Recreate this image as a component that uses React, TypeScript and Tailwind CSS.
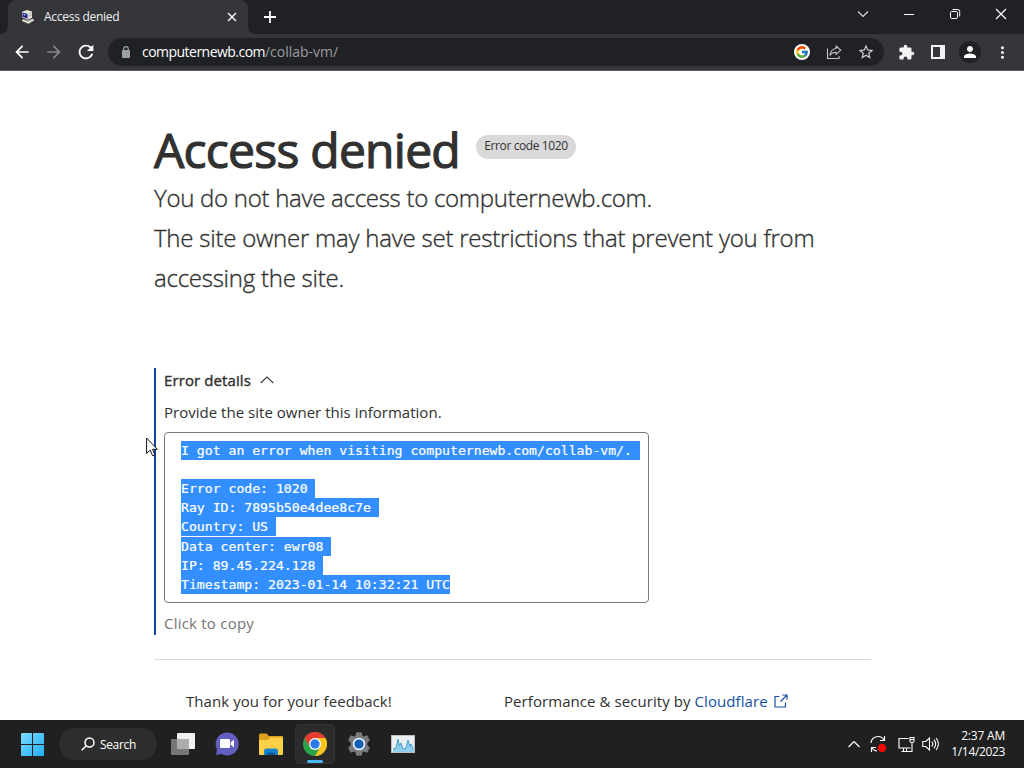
import type { ReactNode } from "react";
import {
  MdArrowBack,
  MdArrowForward,
  MdRefresh,
  MdStarBorder,
  MdExtension,
  MdPerson,
  MdMoreVert,
} from "react-icons/md";
import { FcGoogle } from "react-icons/fc";

function Cell({ children, className = "w-8" }: { children: ReactNode; className?: string }) {
  return <div className={`flex h-full shrink-0 items-center justify-center ${className}`}>{children}</div>;
}

function Favicon() {
  return (
    <svg width="16" height="16" viewBox="0 0 16 16">
      <path d="M1 11.500 3.500 9.500l9-.5 2.500 2-6 4.500z" fill="#b9bab5" stroke="#111" strokeWidth=".8" />
      <path d="M1.500 2.500 7 .5l5.500 1.700v7L7.500 11l-6-2.500z" fill="#e4e4dc" stroke="#111" strokeWidth=".7" />
      <path d="M2.500 3.500 7.500 5v4.500l-5-1.800z" fill="#141a80" />
      <path d="m3.500 4.700 2 .6v1.400l-2-.6z" fill="#b4c8f5" />
      <path d="m9 5 2.700-1.200M9 7l2.700-1" stroke="#999" strokeWidth=".8" />
      <path d="m2 11.500 6 2.200 6-2.700" fill="none" stroke="#fff" />
      <path d="m4 13 4.500 2 4.500-3" fill="none" stroke="#77786f" />
    </svg>
  );
}

function TabStrip() {
  return (
    <div className="flex h-[34px] shrink-0 bg-[#202124]">
      <svg className="mt-auto" width="8" height="8" viewBox="0 0 8 8">
        <path d="M8 0v8H0a8 8 0 0 0 8-8" fill="#35363a" />
      </svg>
      <div className="flex h-full w-[240px] items-center rounded-t-lg bg-[#35363a] pr-[11px] pl-3">
        <Favicon />
        <span className="ml-2 flex-1 text-[12px] tracking-[-0.28px] text-[#eef0f2]">Access denied</span>
        <svg width="10" height="10" viewBox="0 0 10 10" stroke="#eef0f2" strokeWidth="1.5">
          <path d="m1 1 8 8M9 1 1 9" />
        </svg>
      </div>
      <svg className="mt-auto" width="8" height="8" viewBox="0 0 8 8">
        <path d="M0 0v8h8a8 8 0 0 1-8-8" fill="#35363a" />
      </svg>
      <svg className="mt-[11px] ml-2" width="12" height="12" viewBox="0 0 12 12" stroke="#fff" strokeWidth="1.800">
        <path d="M6 0v12M0 6h12" />
      </svg>
      <div className="ml-auto flex h-7 text-white">
        <Cell className="w-[46px]">
          <svg width="12" height="8" viewBox="0 0 12 8" fill="none" stroke="#dedfe1" strokeWidth="1.100">
            <path d="m1 1.500 5 5 5-5" />
          </svg>
        </Cell>
        <Cell className="w-[46px]">
          <svg width="10" height="2" viewBox="0 0 10 2">
            <path d="M0 1h10v1H0z" fill="#fff" />
          </svg>
        </Cell>
        <Cell className="w-[46px]">
          <svg width="12" height="12" viewBox="0 0 12 12" fill="none" stroke="#fff">
            <rect x="1.500" y="3.500" width="7" height="7" rx="1.200" />
            <path d="M3.500 1.500h5.200a2 2 0 0 1 2 2v5" />
          </svg>
        </Cell>
        <Cell className="w-[46px]">
          <svg width="12" height="12" viewBox="0 0 12 12" stroke="#fff" strokeWidth="1.200">
            <path d="m1 1 10 10M11 1 1 11" />
          </svg>
        </Cell>
      </div>
    </div>
  );
}

function Toolbar() {
  return (
    <div className="flex h-[37px] shrink-0 items-center border-b border-[#58595c] bg-[#35363a] px-1.5 text-white">
      <Cell><MdArrowBack size={20} /></Cell>
      <Cell><MdArrowForward size={20} color="#87888b" /></Cell>
      <Cell><MdRefresh size={22} /></Cell>
      <div className="ml-1.5 flex h-7 w-[776px] items-center rounded-full bg-[#202124] pr-0.5 pl-[14px]">
        <svg className="mb-px" width="8" height="12" viewBox="0 0 8 12">
          <path d="M1 4h6q1 0 1 1v6q0 1-1 1H1q-1 0-1-1V5q0-1 1-1" fill="#9aa0a6" />
          <path d="M1.700 4.500V3a2.300 2.300 0 0 1 4.600 0v1.500" fill="none" stroke="#9aa0a6" strokeWidth="1.200" />
        </svg>
        <span className="mb-px ml-3 flex-1 text-[14px] tracking-[-0.02px] text-[#9a9da1]">
          <span className="tracking-[-0.53px] text-white">computernewb.com</span>/collab-vm/
        </span>
        <Cell>
          <div className="flex size-4 items-center justify-center rounded-full bg-white"><FcGoogle size={14} /></div>
        </Cell>
        <Cell>
          <svg width="16" height="16" viewBox="0 0 16 16" fill="none" stroke="#c4c7c9" strokeWidth="1.100">
            <path d="M1.500 4.500v10h11.500V12" />
            <path d="M10 2 14.800 6.200 10 10.400V8.200C7.300 8.200 5.500 9 4 11.300 4.400 7.600 6.500 4.900 10 4.500z" strokeLinejoin="round" />
          </svg>
        </Cell>
        <Cell><MdStarBorder size={18} color="#d0d2d4" /></Cell>
      </div>
      <div className="ml-1.5 flex h-8">
        <Cell><MdExtension size={17} color="#f1f3f4" /></Cell>
        <Cell>
          <svg width="14" height="14" viewBox="0 0 14 14"><path d="M0 0h14v14H0zM2 2v10h7V2z" fill="#f1f3f4" fillRule="evenodd" /></svg>
        </Cell>
        <Cell>
          <div className="flex size-[22px] items-center justify-center rounded-full bg-[#202124]"><MdPerson size={18} /></div>
        </Cell>
        <Cell><MdMoreVert size={19} color="#f1f3f4" /></Cell>
      </div>
    </div>
  );
}

const report: [string, string][] = [
  ["I got an error when visiting computernewb.com/collab-vm/.", "w-[459px]"],
  ["", "w-0"],
  ["Error code: 1020", "w-[134px]"],
  ["Ray ID: 7895b50e4dee8c7e", "w-[198px]"],
  ["Country: US", "w-[95px]"],
  ["Data center: ewr08", "mt-px w-[150px]"],
  ["IP: 89.45.224.128", "w-[142px]"],
  ["Timestamp: 2023-01-14 10:32:21 UTC", "w-[269px]"],
];

function Page() {
  return (
    <main className="relative h-[649px] shrink-0 overflow-hidden bg-white pl-[154px] whitespace-nowrap text-[#313131]">
      <div className="flex h-[107px] pt-[49px]">
        <h1 className="w-[305px] text-[48px] leading-[60px] font-normal tracking-[-0.75px] [-webkit-text-stroke:1.2px_#313131]">Access denied</h1>
        <span className="mt-[15px] ml-[17px] flex h-6 w-[100px] items-center justify-center rounded-full bg-[#d9d9d9] pb-[2px] text-[12px] tracking-[-0.4px]">
          Error code 1020
        </span>
      </div>
      <div className="text-[24px] leading-10 font-light [-webkit-text-stroke:0.35px_#313131]">
        <p className="tracking-[-0.28px]">You do not have access to computernewb.com.</p>
        <p className="tracking-[-0.23px]">The site owner may have set restrictions that prevent you from</p>
        <p className="tracking-[-0.24px]">accessing the site.</p>
      </div>
      <section className="mt-[70px] h-[267px] border-l-2 border-[#0f45a5] pl-2">
        <div className="flex h-6 items-center gap-[9px]">
          <h2 className="w-[87px] text-[15px] tracking-[0.1px] [-webkit-text-stroke:0.4px_#313131]">Error details</h2>
          <svg width="14" height="8" viewBox="0 0 14 8" fill="none" stroke="#404040" strokeWidth="1.200"><path d="m.7 7 6.300-6 6.300 6" /></svg>
        </div>
        <p className="mt-2 h-6 text-[15px] leading-6 tracking-[0.02px]">Provide the site owner this information.</p>
        <div className="mt-2 h-[171px] w-[485px] rounded-[4px] border border-[#7a7a7a] pt-2 pl-4 font-['DejaVu_Sans_Mono',monospace] text-[13.155px] leading-[19px] text-white [-webkit-text-stroke:0.2px_#fff]">
          {report.map(([line, box], i) => (
            <div key={i} className={`h-[19px] bg-[#338fff] ${box}`}>{line}</div>
          ))}
        </div>
        <p className="mt-2 h-6 text-[15px] leading-6 tracking-[0.22px] text-[#747474]">Click to copy</p>
      </section>
      <div className="mt-6 flex w-[717px] border-t border-[#d9d9d9] pt-[29px] pl-8 text-[15px] leading-6">
        <span className="w-[318px] tracking-[0.07px]">Thank you for your feedback!</span>
        <span className="w-[263px] tracking-[0.07px]">Performance &amp; security by <a className="text-[#174fa5]">Cloudflare</a></span>
        <svg className="mt-[5px] ml-[7px]" width="14" height="14" viewBox="0 0 14 14" fill="none" stroke="#174fa5" strokeWidth="1.200">
          <path d="M5.500 2.500H1v10.500h10.500V8.500M8.300 1h4.700v4.700M13 1 6.500 7.500" />
        </svg>
      </div>
      <svg className="absolute top-[366px] left-[146px]" width="12" height="20" viewBox="0 0 12 20">
        <path d="M.6 1v15.500l3.600-3.400 2.400 5.700 2.300-1-2.400-5.500h4.900z" fill="#fff" stroke="#111" />
      </svg>
    </main>
  );
}

function StartIcon() {
  return (
    <svg width="23" height="23" viewBox="0 0 23 23">
      <defs>
        <linearGradient id="win" x2="1" y2="1" gradientUnits="objectBoundingBox"><stop stopColor="#7bdcff" /><stop offset="1" stopColor="#22aef5" /></linearGradient>
      </defs>
      <path d="M1 0h10v11H0V1q0-1 1-1M12 0h10q1 0 1 1v10H12zM0 12h11v11H1q-1 0-1-1zM12 12h11v10q0 1-1 1H12z" fill="url(#win)" />
    </svg>
  );
}

function ChromeIcon() {
  return (
    <svg width="24" height="24" viewBox="0 0 24 24">
      <circle cx="12" cy="12" r="12" fill="#2ba24c" />
      <path d="M12 6h10.400A12 12 0 0 1 12 24l5.200-9z" fill="#fcc31e" />
      <path d="M1.600 6A12 12 0 0 1 22.400 6H12l-5.200 9z" fill="#e53b30" />
      <circle cx="12" cy="12" r="6" fill="#fff" /><circle cx="12" cy="12" r="4.700" fill="#2e7be8" />
    </svg>
  );
}

function Taskbar() {
  return (
    <footer className="flex h-12 shrink-0 items-center bg-[#202020] text-white">
      <Cell className="w-[59px] pl-[6px]"><StartIcon /></Cell>
      <div className="flex h-8 w-[98px] items-center rounded-full bg-[#2d2d2d] pl-[22px]">
        <svg width="14" height="14" viewBox="0 0 14 14" fill="none" stroke="#fff" strokeWidth="1.500"><circle cx="8.500" cy="5.500" r="4.500" /><path d="M5.300 8.700.7 13.300" /></svg>
        <span className="mt-[2px] ml-[5px] text-[12px] tracking-[-0.35px]">Search</span>
      </div>
      <div className="ml-1 flex h-full">
        <Cell className="w-11">
          <svg width="24" height="22" viewBox="0 0 24 22">
            <rect x="6" width="18" height="16" rx="1" fill="#f0f0f0" /><rect y="6" width="18" height="16" rx="1" fill="#777" /><path d="M6 6h12v10H6z" fill="#adadad" />
          </svg>
        </Cell>
        <Cell className="w-11">
          <svg width="24" height="24" viewBox="0 0 24 24">
            <path d="M12 .5A11.500 11.500 0 1 1 6.500 22L1 23l1-5.500A11.500 11.500 0 0 1 12 .5" fill="#625fc0" />
            <rect x="5" y="7" width="10" height="9" rx="1.200" fill="#fff" /><path d="m15.500 10.500 3.500-3v8l-3.500-3z" fill="#fff" />
          </svg>
        </Cell>
        <Cell className="w-11">
          <svg width="24" height="23" viewBox="0 0 24 23">
            <path d="M0 2q0-1.500 1.500-1.500h6L10 3h13q1 0 1 1v10H0z" fill="#dc9f1e" /><path d="M0 7h9l2-2.500h12q1 0 1 1V21q0 1-1 1H1q-1 0-1-1z" fill="#fdd04a" />
            <path d="M5 22v-4q0-2.500 2.500-2.500h9Q19 15.500 19 18v4z" fill="#1782ce" /><path d="M8 19.500h8V22H8z" fill="#0d5b9c" />
          </svg>
        </Cell>
        <div className="flex h-full w-11 flex-col items-center pt-1">
          <div className="flex h-10 w-10 flex-col items-center rounded-[4px] border border-[#333] bg-[#2b2b2b] pt-[7px]">
            <ChromeIcon /><span className="mt-1 h-[3px] w-4 rounded-full bg-[#4cb5f0]" />
          </div>
        </div>
        <Cell className="w-11">
          <svg width="24" height="24" viewBox="0 0 24 24">
            <path d="m9.800 1h4.400l.8 3.200 1.700 1 3.200-1 2.200 3.800L19.700 10.500v3l2.400 2.500-2.200 3.800-3.200-1-1.700 1-.8 3.200H9.800L9 19.800l-1.700-1-3.200 1L1.900 16l2.400-2.500v-3L1.900 8l2.200-3.800 3.200 1L9 4.200z" fill="#777b80" stroke="#777b80" strokeWidth="1.300" strokeLinejoin="round" />
            <circle cx="12" cy="12" r="6.300" fill="#e5edf5" /><circle cx="12" cy="12" r="4.600" fill="#1261b5" />
          </svg>
        </Cell>
        <Cell className="w-11">
          <svg width="24" height="18" viewBox="0 0 24 18">
            <rect x=".5" y=".5" width="23" height="17" fill="#eceff1" stroke="#b9bec2" />
            <path d="M2 17v-3l3-1 2-9 1.500 7L10 8l2 6 3-1 2-8 2 6 1-2 3 5v3z" fill="#90cdeb" />
            <path d="m2 14 3-1 2-9 1.500 7L10 8l2 6 3-1 2-8 2 6 1-2 2 5" fill="none" stroke="#3a9ccd" strokeWidth=".9" />
          </svg>
        </Cell>
      </div>
      <div className="ml-auto flex h-full items-center pr-[19px]">
        <Cell className="w-6"><svg width="12" height="8" viewBox="0 0 12 8" fill="none" stroke="#fff" strokeWidth="1.200"><path d="m.5 7 5.500-5.500L11.500 7" /></svg></Cell>
        <Cell className="w-6">
          <svg width="18" height="18" viewBox="0 0 18 18" fill="none" stroke="#fff" strokeWidth="1.200">
            <path d="M2 8a7 7 0 0 1 13-3M15.500 1v4.500H11M2.500 17v-4.500H7M3 13a7 7 0 0 0 5 3" /><circle cx="13" cy="13" r="4.200" fill="#f00b0b" stroke="none" />
          </svg>
        </Cell>
        <Cell className="w-8">
          <svg width="17" height="17" viewBox="0 0 17 17" fill="none" stroke="#fff" strokeWidth="1.100">
            <path d="M10.500 2.500H1v9.500h11.500M3.500 15.500h9M5.500 12v3.500M8.500 12v3.500M14 7v8.500h-3M12 1.500h4V5q0 1.500-2 1.500T12 5zM12 3.500h4" />
          </svg>
        </Cell>
        <Cell className="w-4">
          <svg className="shrink-0" width="17" height="16" viewBox="0 0 17 16" fill="none" stroke="#fff" strokeWidth="1.100">
            <path d="M.8 5.500h3L7.500 2v12L3.800 10.500h-3zM9.800 5.500q2 2.500 0 5M12 3.700q3.200 4.300 0 8.600M14.200 2q4.300 6 0 12" />
          </svg>
        </Cell>
        <div className="w-[67px] text-right text-[12px] leading-4 tracking-[-0.35px]"><div className="tracking-[-0.2px]">2:37 AM</div><div>1/14/2023</div></div>
      </div>
    </footer>
  );
}

export default function App() {
  return (
    <div className="flex h-[768px] w-[1024px] flex-col overflow-hidden bg-white font-['Open_Sans','Noto_Sans',sans-serif]">
      <TabStrip />
      <Toolbar />
      <Page />
      <Taskbar />
    </div>
  );
}
